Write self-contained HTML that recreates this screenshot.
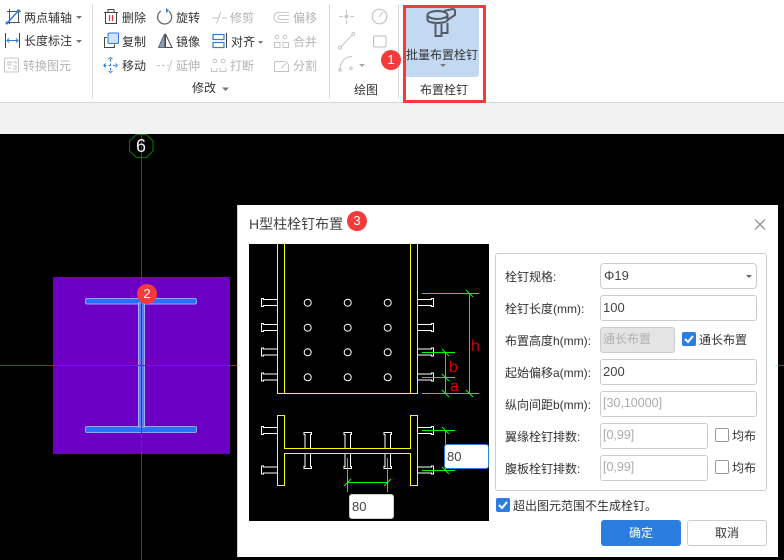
<!DOCTYPE html>
<html><head><meta charset="utf-8">
<style>
*{box-sizing:border-box}
html,body{margin:0;padding:0}
body{width:784px;height:560px;overflow:hidden;position:relative;background:#000;font-family:"Liberation Sans","Noto Sans CJK SC",sans-serif;font-size:12px;color:#333}
.a{position:absolute}
.t{position:absolute;white-space:nowrap;line-height:16px;height:16px;font-size:12px;color:#333}
.g{color:#b4b4b4}
.in{position:absolute;background:#fff;border:1px solid #ccc;border-radius:3px;font-size:13px;line-height:23px;padding-left:2px;color:#444;white-space:nowrap}
.ph{color:#aaa;font-size:12.5px}
.cb{position:absolute;width:14px;height:14px;border-radius:2px;background:#2b7de0}
.cb.off{background:#fff;border:1px solid #999}
.badge{position:absolute;width:20px;height:20px;border-radius:50%;background:#f43a3a;color:#fff;font-size:13px;line-height:20px;text-align:center}
.sep{position:absolute;width:1px;background:#d9d9d9;top:4px;height:94px}
svg{position:absolute;left:0;top:0;overflow:visible}
</style></head><body>

<!-- ribbon -->
<div class="a" style="left:0;top:0;width:784px;height:102px;background:#fff"></div>
<div class="a" style="left:0;top:102px;width:784px;height:1px;background:#d8d8d8"></div>
<div class="a" style="left:0;top:103px;width:784px;height:31px;background:#f2f2f2"></div>
<div class="sep" style="left:92px"></div>
<div class="sep" style="left:329px"></div>
<div class="sep" style="left:398px"></div>
<div class="a" style="left:405px;top:6px;width:74px;height:71px;background:#c2d9f1;border-radius:3px"></div>

<svg width="784" height="560" viewBox="0 0 784 560" fill="none">
 <!-- two point axis -->
 <path d="M9.500 9V24M18.500 10V23M7 11.500H21M7 22.500H20" stroke="#555" stroke-width="1"/>
 <path d="M7 23.300L18.500 10.700" stroke="#2b7de0" stroke-width="1.500"/>
 <circle cx="7" cy="23" r="1.500" fill="#2b7de0"/><circle cx="18.500" cy="10.700" r="1.500" fill="#2b7de0"/>
 <!-- length -->
 <path d="M5.500 33V48M19.500 33V48" stroke="#444"/>
 <path d="M7 40.500H18M9 38.500L7 40.500L9 42.500M16 38.500L18 40.500L16 42.500" stroke="#2b7de0"/>
 <!-- convert -->
 <rect x="4.500" y="58" width="14" height="14" rx="1" stroke="#c4c4c4"/>
 <path d="M8 62h3v3H8zM13 62h3v2M8 68h3M13 66h3v3h-3" stroke="#c4c4c4"/>
 <!-- caret -->
 <path d="M76 16h6l-3 3z M76 40h6l-3 3z" fill="#777"/>
 <!-- delete -->
 <path d="M105.500 12.500H116.500V23.500H105.500ZM104 12.500H118M108 12.500V9.500H114V12.500" stroke="#444"/>
 <path d="M109.500 15V21M112.500 15V21" stroke="#d33" stroke-width="1.200"/>
 <!-- rotate -->
 <path d="M169 11.500A7 7 0 1 1 161 11" stroke="#667" stroke-width="1.300"/>
 <path d="M166 8v5l3-2.500z" fill="#2b7de0"/>
 <!-- trim -->
 <path d="M212 18H219M222 18H227M220.700 12L216.700 23.500" stroke="#c4c4c4"/>
 <!-- copy -->
 <rect x="108" y="33" width="10.500" height="10.500" rx="1" fill="#cfe2f9" stroke="#2b7de0"/>
 <path d="M107 37.500H104.500V47.500H114.500V44.500" stroke="#444"/>
 <!-- mirror -->
 <path d="M164.500 34L158.500 47.500H164.500Z" fill="#8aa0b8" stroke="#667"/>
 <path d="M165.500 34L172 47.500H165.500Z" stroke="#445"/>
 <!-- align -->
 <rect x="213" y="34.500" width="11" height="5" stroke="#2b7de0" stroke-width="1.200"/>
 <rect x="213" y="42.500" width="11" height="5" stroke="#2b7de0" stroke-width="1.200"/>
 <path d="M226.500 33V48" stroke="#444"/>
 <path d="M258 41h5l-2.500 3z" fill="#777"/>
 <!-- move -->
 <path d="M110.500 59V71M104 65.500H117" stroke="#2b7de0" stroke-dasharray="2.500 2"/>
 <path d="M108.500 59L110.500 57.500L112.500 59M108.500 71L110.500 72.500L112.500 71M105.500 63.500L103.800 65.500L105.500 67.500M115.500 63.500L117.200 65.500L115.500 67.500" stroke="#2b7de0"/>
 <!-- extend -->
 <path d="M157 65.500H160M162 65.500H165M167 65.500H169M172 60L168.500 71" stroke="#c4c4c4"/>
 <!-- break -->
 <circle cx="215" cy="61" r="1.800" stroke="#c4c4c4"/><circle cx="223" cy="61" r="1.800" stroke="#c4c4c4"/>
 <path d="M211.500 68V71.500H217V68M220 68V71.500H226V68" stroke="#c4c4c4"/>
 <!-- offset -->
 <path d="M289 12.500H279A5 5 0 0 0 279 22.500H289M289 15.500H280A2 2 0 0 0 280 19.500H289" stroke="#c9c9c9"/>
 <!-- merge -->
 <circle cx="277" cy="37" r="1.800" stroke="#c4c4c4"/><circle cx="285" cy="37" r="1.800" stroke="#c4c4c4"/>
 <path d="M274.500 47.500V42.500H280V47.500ZM283 47.500V42.500H288.500V47.500Z" stroke="#c4c4c4"/>
 <!-- split -->
 <path d="M286 61.500H274.500V71.500H288.500V64" stroke="#c4c4c4"/>
 <path d="M281 68L288 62" stroke="#c4c4c4"/>
 <!-- draw group -->
 <path d="M346.500 10V14M346.500 20V24M339 16.500H343M350 16.500H354" stroke="#c9c9c9"/>
 <circle cx="346.500" cy="16.500" r="2" fill="#c9c9c9"/>
 <circle cx="379.500" cy="16.500" r="7.300" stroke="#c4c4c4" stroke-width="1.200"/>
 <path d="M379 17L383 12" stroke="#c4c4c4"/>
 <path d="M341 46.700L352.300 35" stroke="#c4c4c4"/>
 <circle cx="340" cy="47.700" r="1.500" stroke="#c4c4c4"/><circle cx="353.300" cy="34" r="1.500" stroke="#c4c4c4"/>
 <rect x="373.500" y="36" width="12.500" height="11" rx="1.500" stroke="#bbb"/>
 <path d="M340 70C340 62 345 56.500 352 56.500" stroke="#c4c4c4"/>
 <circle cx="340" cy="70" r="1.300" stroke="#c4c4c4"/><circle cx="351" cy="68.300" r="1.300" stroke="#c4c4c4"/>
 <path d="M359 64h6l-3 3z" fill="#aaa"/>
 <!-- stud icon -->
 <g stroke="#555c68" stroke-width="2">
  <ellipse cx="437.500" cy="15" rx="10" ry="4"/>
  <path d="M427.500 15V20C428 24 447 24 447.500 20V15"/>
  <path d="M444 11L452.500 9Q455 9 455 11V15L447.500 20"/>
  <path d="M435.500 24V36H441.500V24M441.500 33H447.500V23"/>
 </g>
 <path d="M440 64h6l-3 3z" fill="#777"/>
 <!-- modify caret -->
 <path d="M222 87.500h7l-3.500 3.500z" fill="#777"/>
 <rect x="404.500" y="6.500" width="80" height="95" stroke="#f33b3b" stroke-width="3"/>
</svg>

<div class="t" style="left:24px;top:10px">两点辅轴</div>
<div class="t" style="left:24px;top:33px">长度标注</div>
<div class="t g" style="left:23px;top:58px">转换图元</div>
<div class="t" style="left:122px;top:10px">删除</div>
<div class="t" style="left:176px;top:10px">旋转</div>
<div class="t g" style="left:230px;top:10px">修剪</div>
<div class="t g" style="left:293px;top:10px">偏移</div>
<div class="t" style="left:122px;top:34px">复制</div>
<div class="t" style="left:176px;top:34px">镜像</div>
<div class="t" style="left:231px;top:34px">对齐</div>
<div class="t g" style="left:293px;top:34px">合并</div>
<div class="t" style="left:122px;top:58px">移动</div>
<div class="t g" style="left:176px;top:58px">延伸</div>
<div class="t g" style="left:230px;top:58px">打断</div>
<div class="t g" style="left:293px;top:58px">分割</div>
<div class="t" style="left:192px;top:80px">修改</div>
<div class="t" style="left:354px;top:82px">绘图</div>
<div class="t" style="left:420px;top:82px">布置栓钉</div>
<div class="t" style="left:406px;top:47px">批量布置栓钉</div>
<div class="badge" style="left:381px;top:50px">1</div>

<!-- CAD -->
<div class="a" style="left:53px;top:277px;width:177px;height:177px;background:#6b00c4"></div>
<svg width="784" height="560" viewBox="0 0 784 560" fill="none">
 <path d="M141.500 134V560" stroke="#d00030"/>
 <path d="M0 365.500H237M778 365.500H784" stroke="#d00030"/>
 <path d="M136.500 134.500L146.500 134.500L153 141L153 151L146.500 157.500L136.500 157.500L129.500 151L129.500 141Z" stroke="#0a7a0a"/>
 <rect x="85.500" y="298.500" width="111" height="5.500" rx="1.500" fill="#2a70ff" stroke="#8caaff"/>
 <rect x="85.500" y="426.500" width="111" height="6" rx="1.500" fill="#2a70ff" stroke="#8caaff"/>
 <rect x="138.500" y="303" width="6" height="124" fill="#5a78f0" stroke="#9ab4ff"/>
 <path d="M141.500 277V454M138 365.500H145" stroke="#d00030"/>
</svg>
<div class="a" style="left:131px;top:134px;width:20px;text-align:center;color:#eee;font-size:18px;line-height:24px;font-family:'Liberation Sans',sans-serif">6</div>
<div class="badge" style="left:137px;top:284px">2</div>

<!-- dialog -->
<div class="a" style="left:237px;top:205px;width:541px;height:352px;background:#fff;border-left:1px solid #ccc"></div>
<div class="t" style="left:249px;top:214px;font-size:14px;line-height:20px;height:20px;color:#444">H型柱栓钉布置</div>
<div class="badge" style="left:347px;top:211px">3</div>
<svg width="784" height="560" viewBox="0 0 784 560" fill="none">
 <path d="M755 219.500L765 229.500M765 219.500L755 229.500" stroke="#888" stroke-width="1.200"/>
 <rect x="249" y="244" width="240" height="277" fill="#000"/>
 <!-- yellow -->
 <g stroke="#ffff00" stroke-width="1">
  <path d="M277.500 244V393.500H417.500V244M284.500 244V393.500M410.500 244V393.500"/>
  <path d="M277.500 415.500H284.500V448.500H410.500V415.500H417.500V485.500H410.500V453.500H284.500V485.500H277.500Z"/>
 </g>
 <!-- studs -->
 <g stroke="#fff" stroke-width="1">
  <path d="M277 299.500H263.500V298.500H261.500V306.500H263.500V305.500H277M277 324.500H263.500V323.500H261.500V331.500H263.500V330.500H277M277 349H263.500V348H261.500V356H263.500V355H277M277 374H263.500V373H261.500V381H263.500V380H277"/>
  <path d="M418 299.500H431.500V298.500H433.500V306.500H431.500V305.500H418M418 324.500H431.500V323.500H433.500V331.500H431.500V330.500H418M418 349H431.500V348H433.500V356H431.500V355H418M418 374H431.500V373H433.500V381H431.500V380H418"/>
  <path d="M277 427.500H263.500V426.500H261.500V434.500H263.500V433.500H277M277 467H263.500V466H261.500V474H263.500V473H277"/>
  <path d="M418 427.500H431.500V426.500H433.500V434.500H431.500V433.500H418M418 467H431.500V466H433.500V474H431.500V473H418"/>
  <g fill="#000" stroke-width="1">
   <circle cx="307.700" cy="302.700" r="3.500"/><circle cx="347.700" cy="302.700" r="3.500"/><circle cx="387.700" cy="302.700" r="3.500"/>
   <circle cx="307.700" cy="327.700" r="3.500"/><circle cx="347.700" cy="327.700" r="3.500"/><circle cx="387.700" cy="327.700" r="3.500"/>
   <circle cx="307.700" cy="352.300" r="3.500"/><circle cx="347.700" cy="352.300" r="3.500"/><circle cx="387.700" cy="352.300" r="3.500"/>
   <circle cx="307.700" cy="377.300" r="3.500"/><circle cx="347.700" cy="377.300" r="3.500"/><circle cx="387.700" cy="377.300" r="3.500"/>
  </g>
  <path d="M305 448V434.500H304V432.500H311.500V434.500H310.500V448M345 448V434.500H344V432.500H351.500V434.500H350.500V448M385 448V434.500H384V432.500H391.500V434.500H390.500V448"/>
  <path d="M305 454V466.500H304V468.500H311.500V466.500H310.500V454M345 454V466.500H344V468.500H351.500V466.500H350.500V454M385 454V466.500H384V468.500H391.500V466.500H390.500V454"/>
 </g>
 <!-- green -->
 <g stroke="#00ff00" stroke-width="1">
  <path d="M422 293.500H479M469.500 293.500V393.500M422 393.500H479M422 352.500H455M422 377.500H455M445.500 352.500V393.500"/>
  <path d="M466 290L473 297M442 349L449 356M442 374L449 381M442 390L449 397M466 390L473 397"/>
  <path d="M422 430.500H455M422 470.500H455M445.500 430.500V470.500M442 427L449 434M442 467L449 474"/>
  <path d="M347.500 458V492M387.500 458V492M347.500 482.500H387.500M344 486L351 479M384 486L391 479"/>
 </g>
 <g font-family="'Liberation Sans',sans-serif" fill="#d80000" font-size="16">
  <text x="471" y="351">h</text><text x="449" y="372">b</text><text x="450" y="391">a</text>
 </g>
</svg>
<div class="in" style="left:349px;top:494px;width:45px;height:25px">80</div>
<div class="in" style="left:444px;top:444px;width:45px;height:25px;border-color:#2b7de0">80</div>

<!-- form -->
<div class="a" style="left:495px;top:253px;width:272px;height:238px;border:1px solid #ccc;border-radius:3px"></div>
<div class="t" style="left:505px;top:269px">栓钉规格:</div>
<div class="t" style="left:505px;top:301px">栓钉长度(mm):</div>
<div class="t" style="left:505px;top:333px">布置高度h(mm):</div>
<div class="t" style="left:505px;top:365px">起始偏移a(mm):</div>
<div class="t" style="left:505px;top:397px">纵向间距b(mm):</div>
<div class="t" style="left:505px;top:429px">翼缘栓钉排数:</div>
<div class="t" style="left:505px;top:461px">腹板栓钉排数:</div>

<div class="in" style="left:600px;top:263px;width:157px;height:26px;padding-left:3px;line-height:24px;border-radius:4px">Φ19</div>
<svg width="784" height="560" viewBox="0 0 784 560" fill="none"><path d="M746 275h6l-3 3z" fill="#666"/></svg>
<div class="in" style="left:600px;top:295px;width:157px;height:26px">100</div>
<div class="in" style="left:600px;top:327px;width:75px;height:26px;background:#e4e4e4;color:#b0b0b0;font-size:12px">通长布置</div>
<div class="in" style="left:600px;top:359px;width:157px;height:26px">200</div>
<div class="in ph" style="left:600px;top:391px;width:157px;height:26px">[30,10000]</div>
<div class="in ph" style="left:600px;top:423px;width:108px;height:26px">[0,99]</div>
<div class="in ph" style="left:600px;top:455px;width:108px;height:26px">[0,99]</div>

<div class="cb" style="left:682px;top:332px"><svg width="14" height="14" fill="none"><path d="M3 7L6 10L11 4" stroke="#fff" stroke-width="2"/></svg></div>
<div class="t" style="left:699px;top:332px">通长布置</div>
<div class="cb off" style="left:715px;top:428px"></div>
<div class="t" style="left:732px;top:428px">均布</div>
<div class="cb off" style="left:715px;top:460px"></div>
<div class="t" style="left:732px;top:460px">均布</div>
<div class="cb" style="left:496px;top:498px"><svg width="14" height="14" fill="none"><path d="M3 7L6 10L11 4" stroke="#fff" stroke-width="2"/></svg></div>
<div class="t" style="left:513px;top:498px">超出图元范围不生成栓钉。</div>

<div class="a" style="left:601px;top:520px;width:80px;height:26px;background:#2b7de0;border-radius:3px;color:#fff;text-align:center;line-height:26px">确定</div>
<div class="a" style="left:687px;top:520px;width:80px;height:26px;background:#fff;border:1px solid #ccc;border-radius:3px;color:#333;text-align:center;line-height:24px">取消</div>

</body></html>
